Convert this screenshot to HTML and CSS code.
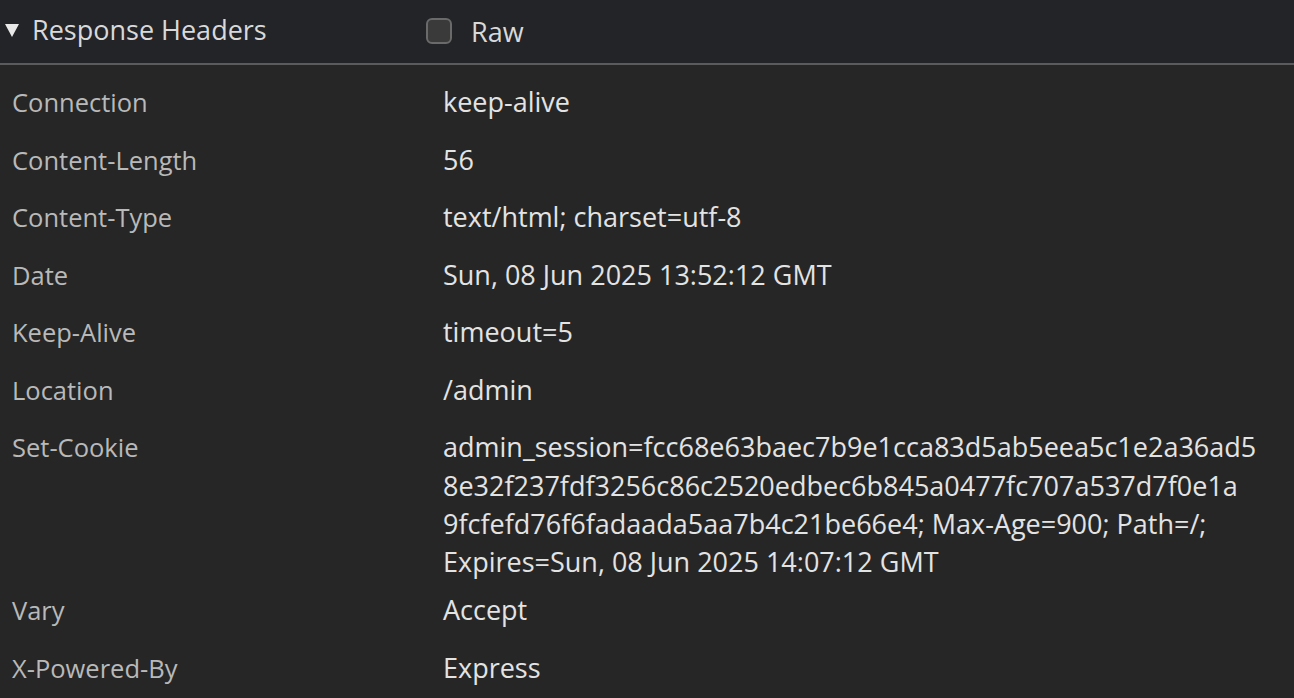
FILE: index.html
```html
<!DOCTYPE html>
<html>
<head>
<meta charset="utf-8">
<link rel="stylesheet" href="styles.css">
</head>
<body>
<div class="panel">
  <div class="header">
    <div class="title"><span class="tri"></span><span>Response Headers</span></div>
    <label class="raw"><span class="box"></span><span>Raw</span></label>
  </div>
  <div class="rows">
    <div class="row"><div class="k">Connection</div><div class="v">keep-alive</div></div>
    <div class="row"><div class="k">Content-Length</div><div class="v">56</div></div>
    <div class="row"><div class="k">Content-Type</div><div class="v">text/html; charset=utf-8</div></div>
    <div class="row"><div class="k">Date</div><div class="v">Sun, 08 Jun 2025 13:52:12 GMT</div></div>
    <div class="row"><div class="k">Keep-Alive</div><div class="v">timeout=5</div></div>
    <div class="row"><div class="k">Location</div><div class="v">/admin</div></div>
    <div class="row"><div class="k">Set-Cookie</div><div class="v">admin_session=fcc68e63baec7b9e1cca83d5ab5eea5c1e2a36ad5<br>8e32f237fdf3256c86c2520edbec6b845a0477fc707a537d7f0e1a<br>9fcfefd76f6fadaada5aa7b4c21be66e4; Max-Age=900; Path=/;<br>Expires=Sun, 08 Jun 2025 14:07:12 GMT</div></div>
    <div class="row"><div class="k">Vary</div><div class="v">Accept</div></div>
    <div class="row"><div class="k">X-Powered-By</div><div class="v">Express</div></div>
  </div>
</div>
</body>
</html>
```
FILE: styles.css
```css
html, body {
  margin: 0;
  padding: 0;
  background: #262626;
}
body {
  font-family: "Open Sans", "Noto Sans", sans-serif;
  font-size: 27px;
  width: 1294px;
  height: 698px;
  overflow: hidden;
}
.panel {
  display: flex;
  flex-direction: column;
}
.header {
  height: 63px;
  background: #232427;
  border-bottom: 2px solid #5b5b5b;
  display: flex;
  align-items: center;
  color: #d9d9d9;
}
.title {
  width: 426px;
  display: flex;
  align-items: center;
  padding-left: 5px;
  box-sizing: border-box;
  margin-top: -5px;
}
.tri {
  width: 0;
  height: 0;
  border-left: 7.5px solid transparent;
  border-right: 7.5px solid transparent;
  border-top: 13px solid #e8e8e8;
  margin-right: 13px;
  margin-top: 2px;
}
.raw {
  display: flex;
  align-items: center;
}
.box {
  width: 22px;
  height: 22px;
  border: 2px solid #6a6a6a;
  border-radius: 6px;
  background: #3a3a3a;
  margin-right: 19px;
  margin-top: -2px;
}
.rows {
  display: flex;
  flex-direction: column;
  padding-top: 8.75px;
}
.row {
  display: flex;
  box-sizing: border-box;
  min-height: 57.5px;
  padding-top: 9.6px;
}
.k {
  width: 443px;
  padding-left: 12px;
  box-sizing: border-box;
  color: #b9b9b9;
  font-size: 25.5px;
  line-height: 38.3px;
}
.v {
  color: #e3e3e3;
  line-height: 38.3px;
}
```
